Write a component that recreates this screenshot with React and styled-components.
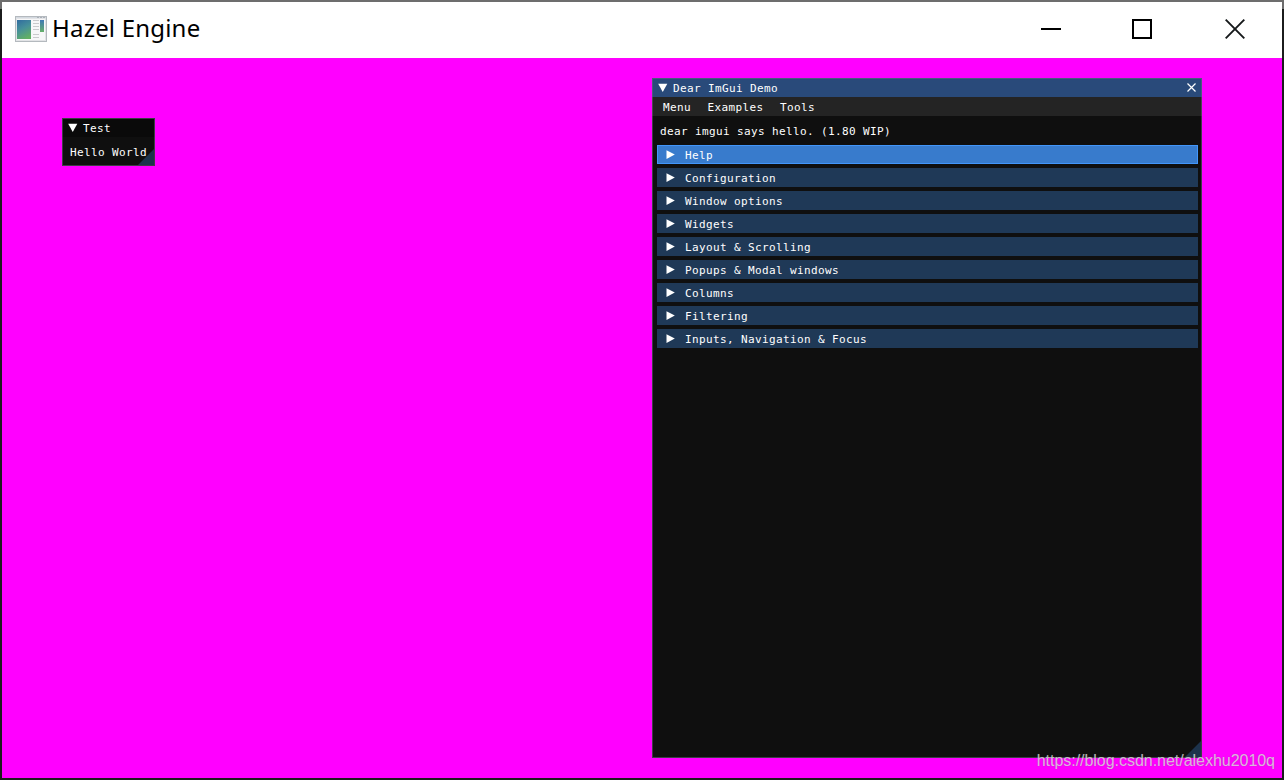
import React from 'react';
import styled, { createGlobalStyle } from 'styled-components';

const GlobalStyle = createGlobalStyle`
  * { box-sizing: border-box; }
  body { margin: 0; background: #1a1a1a; overflow: hidden; }
`;

const Frame = styled.div`
  width: 1284px;
  height: 780px;
  display: flex;
  flex-direction: column;
  padding: 0 2px 2px;
  background: linear-gradient(#6d6d6d 7px, #1b1c1c 7px);
  border-top: 2px solid #6d6d6d;
`;

const TitleBar = styled.header`
  height: 56px;
  flex: none;
  display: flex;
  align-items: center;
  padding-left: 13px;
  background: #fff;
  color: #000;
  > svg { margin-top: -2px; }
`;

const Title = styled.h1`
  flex: 1;
  margin: 0 0 0 5px;
  font: 400 24px/52px 'Noto Sans', 'Open Sans', sans-serif;
  letter-spacing: 0.2px;
  height: 56px;
  white-space: nowrap;
`;

const Controls = styled.div`
  display: flex;
  height: 56px;
  gap: 72px;
  padding: 17px 37px 0 0;
  svg { display: block; }
`;

const Control = styled.div`
  width: 20px;
  margin-left: ${(p) => p.$nudge || 0}px;
`;

const Viewport = styled.main`
  position: relative;
  flex: 1;
  background: #f0f;
`;

const Panel = styled.section`
  position: absolute;
  left: ${(p) => p.$x}px;
  top: ${(p) => p.$y}px;
  width: ${(p) => p.$w}px;
  height: ${(p) => p.$h}px;
  background: #0f0f0f;
  color: #fff;
  font: 11px/19px 'DejaVu Sans Mono', monospace;
  letter-spacing: 0.378px;
  white-space: pre;
  &::after {
    content: '';
    position: absolute;
    inset: 0;
    border: 1px solid rgba(110, 110, 128, 0.5);
    pointer-events: none;
  }
`;

const PanelTitle = styled.div`
  height: 19px;
  display: flex;
  align-items: center;
  padding: 0 5px 0 6px;
  background: ${(p) => (p.$active ? '#294a7a' : '#0a0a0a')};
  svg { flex: none; }
  span { flex: 1; margin-left: 5px; height: 19px; line-height: 21px; }
`;

const MenuBar = styled.nav`
  display: flex;
  gap: 16.5px;
  height: 19px;
  padding-left: 11px;
  line-height: 21px;
  background: #242424;
`;

const Body = styled.div`
  padding: ${(p) => p.$pad};
`;

const Line = styled.div`
  height: 13px;
  line-height: 13px;
  padding-left: 3px;
`;

const Headers = styled.div`
  display: flex;
  flex-direction: column;
  gap: 4px;
  margin-top: 7px;
`;

const Header = styled.div`
  height: 19px;
  display: flex;
  align-items: center;
  padding-left: 9px;
  background: ${(p) => (p.$hot ? '#387bcc' : '#1f3957')};
  box-shadow: ${(p) => (p.$hot ? 'inset 0 0 0 1px #4296fa' : 'none')};
  span { margin-left: 10px; line-height: 21px; height: 19px; }
`;

const Grip = styled.div`
  position: absolute;
  right: 1px;
  bottom: 1px;
  width: 16px;
  height: 16px;
  background: #1d334c;
  clip-path: polygon(100% 0, 100% 100%, 0 100%);
`;

const Watermark = styled.div`
  position: absolute;
  right: 7px;
  bottom: 7px;
  font: 16px/20px 'Liberation Sans', sans-serif;
  letter-spacing: -0.03px;
  color: rgba(255, 255, 255, 0.65);
  text-shadow: 0 0 1px rgba(90, 90, 90, 0.6);
`;

const AppIcon = () => (
  <svg width="32" height="26" viewBox="0 0 32 26">
    <defs>
      <linearGradient id="pane" x1="0.2" y1="0" x2="0.6" y2="1">
        <stop offset="0" stopColor="#33709f" />
        <stop offset="0.45" stopColor="#46909a" />
        <stop offset="1" stopColor="#62b064" />
      </linearGradient>
      <linearGradient id="side" x1="0" y1="0" x2="0" y2="1">
        <stop offset="0" stopColor="#3f79b5" />
        <stop offset="1" stopColor="#66b06a" />
      </linearGradient>
    </defs>
    <rect x="0.5" y="0.5" width="31" height="25" fill="#e2e3e6" stroke="#b4b9be" />
    <path d="M1 1.5H31" stroke="#d3d9e0" />
    <path d="M22 1.5H30" stroke="#aab0b8" strokeDasharray="2 1" />
    <rect x="2" y="3" width="28" height="21" fill="#f7f7f8" />
    <rect x="2" y="4" width="14" height="19" fill="url(#pane)" />
    <path d="M18 4.5h6M18 7.5h6M18 10.5h6M18 13.5h6M18 18.5h6M18 21.5h6" stroke="#c9cacc" />
    <rect x="25" y="4" width="4" height="12" fill="url(#side)" />
  </svg>
);

const ArrowDown = () => (
  <svg width="10" height="10" viewBox="0 0 10 10">
    <path d="M0.2 0.7H9.3L4.75 9Z" fill="#fff" />
  </svg>
);

const ArrowRight = () => (
  <svg width="9" height="10" viewBox="0 0 9 10">
    <path d="M0.5 0.2V9L8.8 4.6Z" fill="#fff" />
  </svg>
);

const sections = [
  'Help',
  'Configuration',
  'Window options',
  'Widgets',
  'Layout & Scrolling',
  'Popups & Modal windows',
  'Columns',
  'Filtering',
  'Inputs, Navigation & Focus',
];

export default function App() {
  return (
    <>
      <GlobalStyle />
      <Frame>
        <TitleBar>
          <AppIcon />
          <Title>Hazel Engine</Title>
          <Controls>
            <Control>
              <svg width="20" height="20"><path d="M0 10H20" stroke="#000" strokeWidth="2" /></svg>
            </Control>
            <Control $nudge={-1}>
              <svg width="20" height="20"><rect x="1" y="1" width="18" height="18" fill="none" stroke="#000" strokeWidth="2" /></svg>
            </Control>
            <Control $nudge={1}>
              <svg width="20" height="20"><path d="M0.7 0.7L19.3 19.3M19.3 0.7L0.7 19.3" stroke="#15181a" strokeWidth="1.9" /></svg>
            </Control>
          </Controls>
        </TitleBar>
        <Viewport>
          <Panel $x={60} $y={60} $w={93} $h={48}>
            <PanelTitle><ArrowDown /><span>Test</span></PanelTitle>
            <Body $pad="9px 0 0 5px"><Line>Hello World</Line></Body>
            <Grip />
          </Panel>
          <Panel $x={650} $y={20} $w={550} $h={680}>
            <PanelTitle $active>
              <ArrowDown />
              <span>Dear ImGui Demo</span>
              <svg width="11" height="11" viewBox="0 0 11 11"><path d="M1.5 1.5L9.5 9.5M9.5 1.5L1.5 9.5" stroke="#fff" strokeWidth="1.2" /></svg>
            </PanelTitle>
            <MenuBar>
              <span>Menu</span>
              <span>Examples</span>
              <span>Tools</span>
            </MenuBar>
            <Body $pad="9px 4px 0 5px">
              <Line>dear imgui says hello. (1.80 WIP)</Line>
              <Headers>
                {sections.map((name, i) => (
                  <Header key={name} $hot={i === 0}>
                    <ArrowRight />
                    <span>{name}</span>
                  </Header>
                ))}
              </Headers>
            </Body>
            <Grip />
          </Panel>
          <Watermark>https://blog.csdn.net/alexhu2010q</Watermark>
        </Viewport>
      </Frame>
    </>
  );
}
